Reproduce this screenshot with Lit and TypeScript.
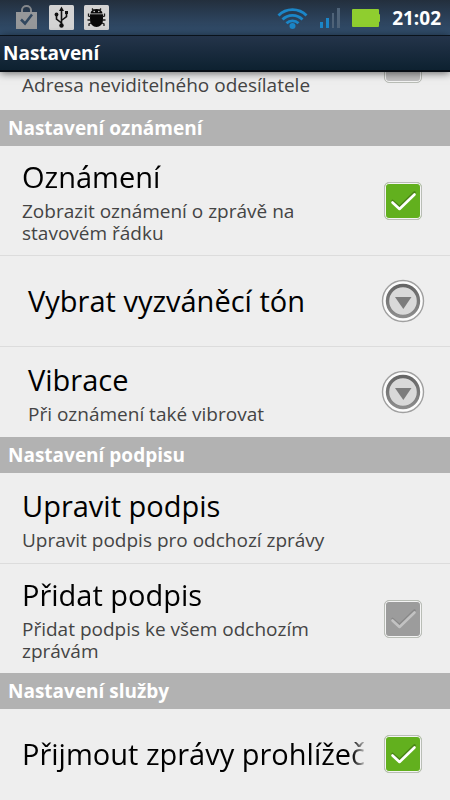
import { LitElement, html, css, nothing } from "lit";
import { customElement, property } from "lit/decorators.js";
import { classMap } from "lit/directives/class-map.js";

@customElement("status-bar")
class StatusBar extends LitElement {
  static styles = css`
    :host {
      display: flex;
      align-items: center;
      justify-content: space-between;
      height: 35px;
      padding: 0 9px 0 15px;
      background: linear-gradient(#232f3d, #2b4058 50%, #33506f);
      color: #fff;
      font-size: 19px;
      font-weight: 700;
      line-height: 24px;
    }
    .group {
      display: flex;
      align-items: center;
      gap: 10px;
    }
    .group.system {
      gap: 12px;
    }
    svg {
      display: block;
    }
  `;

  render() {
    return html`
      <div class="group">
        <svg width="24" height="26" viewBox="0 0 24 26">
          <path d="M7 8V5a4.500 4 0 0 1 9 0v3" fill="none" stroke="#85888c" stroke-width="2" />
          <path d="M1 7h21v17H1z" fill="#96989a" />
          <path d="M6 14.500l4 4 7-9" fill="none" stroke="#30475f" stroke-width="2.500" />
        </svg>
        <svg width="25" height="25" viewBox="0 0 25 25">
          <rect width="25" height="25" rx="1.500" fill="#d3d3d3" />
          <path d="M12.500 4v17M12.500 18l-5-4v-4M12.500 15.500l5-4V8" fill="none" stroke="#111" stroke-width="1.600" />
          <path d="M12.500 1.500l2.500 4.500h-5z" fill="#111" />
          <circle cx="12.500" cy="20.500" r="2.200" fill="#111" />
          <circle cx="7.500" cy="9.500" r="1.900" fill="#111" />
          <path d="M16 6h3v3h-3z" fill="#111" />
        </svg>
        <svg width="25" height="25" viewBox="0 0 25 25">
          <rect width="25" height="25" rx="1.500" fill="#d3d3d3" />
          <path d="M6.500 8.500a6 4.500 0 0 1 12 0z" fill="#080808" />
          <path d="M6 9.200h13v6a6.500 6.800 0 0 1-13 0z" fill="#080808" />
          <path
            d="M9.500 5.500L8 3.500M15.500 5.500L17 3.500M7 12l-2.500-1V8.500M7 15H3.500M7 18l-2 1v2M18 12l2.500-1V8.500M18 15h3.500M18 18l2 1v2"
            fill="none" stroke="#1a1a1a" stroke-width="1.300" />
          <circle cx="10.200" cy="6.500" r=".8" fill="#d3d3d3" />
          <circle cx="14.800" cy="6.500" r=".8" fill="#d3d3d3" />
        </svg>
      </div>
      <div class="group system">
        <svg width="31" height="24" viewBox="0 0 31 24">
          <g fill="none" stroke="#1b86c8" stroke-width="2.800">
            <path d="M1.500 9.500a19.500 19.500 0 0 1 28 0" />
            <path d="M5.500 13.500a14 14 0 0 1 20 0" />
            <path d="M9.500 17.300a8.500 8.500 0 0 1 12 0" />
          </g>
          <circle cx="15.500" cy="20" r="3" fill="#1b86c8" />
        </svg>
        <svg width="20" height="20" viewBox="0 0 20 20">
          <path d="M0 14h3v6H0zM6 10h3v10H6z" fill="#1b86c8" />
          <path d="M12 5h2v15h-2zM17 0h3v20h-3z" fill="#4f6378" />
        </svg>
        <svg width="28" height="18" viewBox="0 0 28 18">
          <path d="M1 0h25a1 1 0 0 1 1 1v4a1 1 0 0 1 1 1v6a1 1 0 0 1-1 1v4a1 1 0 0 1-1 1H1a1 1 0 0 1-1-1V1a1 1 0 0 1 1-1z" fill="#8fce2f" />
        </svg>
        <time>21:02</time>
      </div>
    `;
  }
}

@customElement("check-row")
class CheckRow extends LitElement {
  @property() title = "";
  @property() summary = "";
  @property({ type: Boolean }) checked = false;
  @property({ type: Boolean }) disabled = false;
  @property({ type: Boolean }) scrolled = false;

  static styles = css`
    :host {
      display: block;
    }
    .row {
      box-sizing: border-box;
      display: flex;
      align-items: center;
      gap: 16px;
      min-height: 90px;
      padding: 11px 28px 11px 22px;
    }
    .row.scrolled {
      padding-bottom: 14px;
    }
    .text {
      flex: 1;
      min-width: 0;
    }
    .row.scrolled .text {
      align-self: flex-end;
    }
    .title,
    .summary {
      display: block;
    }
    .title {
      overflow: hidden;
      color: #000;
      font-size: 29px;
      line-height: 40px;
      white-space: nowrap;
      mask-image: linear-gradient(to left, transparent, #000 16px);
    }
    .summary {
      padding-right: 40px;
      color: #444;
      font-size: 19px;
      line-height: 22px;
    }
    .title + .summary {
      margin-top: 3px;
    }
    .box {
      display: grid;
      flex: none;
    }
    .box > * {
      grid-area: 1 / 1;
    }
    input {
      appearance: none;
      box-sizing: border-box;
      width: 38px;
      height: 38px;
      margin: 0;
      border: 1px solid #b9bdb6;
      border-radius: 5px;
      background: #9c9c9c;
      box-shadow: inset 0 0 0 1px #f4f4f4;
    }
    .row.scrolled input {
      background: #c0c0c0;
    }
    input:checked:enabled {
      background: #62b01e;
    }
    svg {
      pointer-events: none;
    }
  `;

  render() {
    const stroke = this.disabled ? "#c2c2c2" : "#fff";
    const shade = this.disabled ? ".12" : ".25";
    return html`
      <label class=${classMap({ row: true, scrolled: this.scrolled })}>
        <span class="text">
          ${this.title ? html`<span class="title">${this.title}</span>` : nothing}
          ${this.summary ? html`<span class="summary">${this.summary}</span>` : nothing}
        </span>
        <span class="box">
          <input type="checkbox" .checked=${this.checked} ?disabled=${this.disabled} />
          ${this.checked
            ? html`<svg width="38" height="38" viewBox="0 0 38 38" fill="none" stroke-linecap="round" stroke-linejoin="round">
                <path d="M8.500 19l7 6 15-14.500" stroke="#000" stroke-opacity=${shade} stroke-width="2.600" />
                <path d="M8.500 20.500l7 6.500 15-14.500" stroke=${stroke} stroke-width="2.600" />
              </svg>`
            : nothing}
        </span>
      </label>
    `;
  }
}

@customElement("action-row")
class ActionRow extends LitElement {
  @property() title = "";
  @property() summary = "";
  @property({ type: Boolean }) opens = false;

  static styles = css`
    :host {
      display: block;
    }
    .row {
      box-sizing: border-box;
      display: flex;
      align-items: center;
      gap: 16px;
      width: 100%;
      min-height: 90px;
      margin: 0;
      padding: 11px 25px 11px 22px;
      border: 0;
      background: none;
      font: inherit;
      text-align: left;
    }
    .row.opens {
      padding-left: 28px;
    }
    .text {
      flex: 1;
      min-width: 0;
    }
    .title,
    .summary {
      display: block;
    }
    .title {
      color: #000;
      font-size: 29px;
      line-height: 40px;
      white-space: nowrap;
    }
    .summary {
      margin-top: 3px;
      color: #444;
      font-size: 19px;
      line-height: 22px;
    }
    svg {
      display: block;
      flex: none;
    }
  `;

  render() {
    return html`
      <button type="button" class=${classMap({ row: true, opens: this.opens })}>
        <span class="text">
          <span class="title">${this.title}</span>
          ${this.summary ? html`<span class="summary">${this.summary}</span>` : nothing}
        </span>
        ${this.opens
          ? html`<svg width="44" height="44" viewBox="0 0 44 44">
              <defs>
                <linearGradient id="ring" x1="0" y1="0" x2="0" y2="1">
                  <stop offset="0" stop-color="#666" />
                  <stop offset="1" stop-color="#8c8c8c" />
                </linearGradient>
              </defs>
              <circle cx="22" cy="22" r="20.500" fill="#fcfcfc" stroke="#a0a0a0" stroke-width="1.400" />
              <circle cx="22" cy="22" r="15.500" fill="#d9d9d9" stroke="url(#ring)" stroke-width="3.400" />
              <path d="M14 18h16.500l-8.200 12z" fill="#7c7c7c" />
            </svg>`
          : nothing}
      </button>
    `;
  }
}

@customElement("app-root")
class AppRoot extends LitElement {
  static styles = css`
    :host {
      display: flex;
      flex-direction: column;
      min-height: 100vh;
      overflow: hidden;
      background: #eee;
      font-family: "Open Sans", "Noto Sans", sans-serif;
    }
    .bar {
      z-index: 1;
      box-sizing: border-box;
      height: 37px;
      margin: 0;
      padding: 0 3px;
      border-top: 1px solid #0a121b;
      border-bottom: 2px solid #070d14;
      background: linear-gradient(#24344a, #0d2130);
      box-shadow: 0 1px 8px rgba(0, 0, 0, 0.6);
      color: #fff;
      font-size: 19px;
      line-height: 34px;
    }
    .list {
      overflow: hidden;
    }
    .first {
      margin-top: -52px;
    }
    .divided {
      border-bottom: 1px solid #dcdcdc;
    }
    h2 {
      margin: 0;
      padding: 0 8px;
      background: #b2b2b2;
      color: #fff;
      font-size: 19px;
      line-height: 36px;
    }
  `;

  render() {
    return html`
      <status-bar></status-bar>
      <h1 class="bar">Nastavení</h1>
      <main class="list">
        <check-row class="first" summary="Adresa neviditelného odesílatele" disabled scrolled></check-row>
        <h2>Nastavení oznámení</h2>
        <check-row class="divided" title="Oznámení" summary="Zobrazit oznámení o zprávě na stavovém řádku" checked></check-row>
        <action-row class="divided" title="Vybrat vyzváněcí tón" opens></action-row>
        <action-row title="Vibrace" summary="Při oznámení také vibrovat" opens></action-row>
        <h2>Nastavení podpisu</h2>
        <action-row class="divided" title="Upravit podpis" summary="Upravit podpis pro odchozí zprávy"></action-row>
        <check-row title="Přidat podpis" summary="Přidat podpis ke všem odchozím zprávám" checked disabled></check-row>
        <h2>Nastavení služby</h2>
        <check-row title="Přijmout zprávy prohlížeč" checked></check-row>
      </main>
    `;
  }
}
